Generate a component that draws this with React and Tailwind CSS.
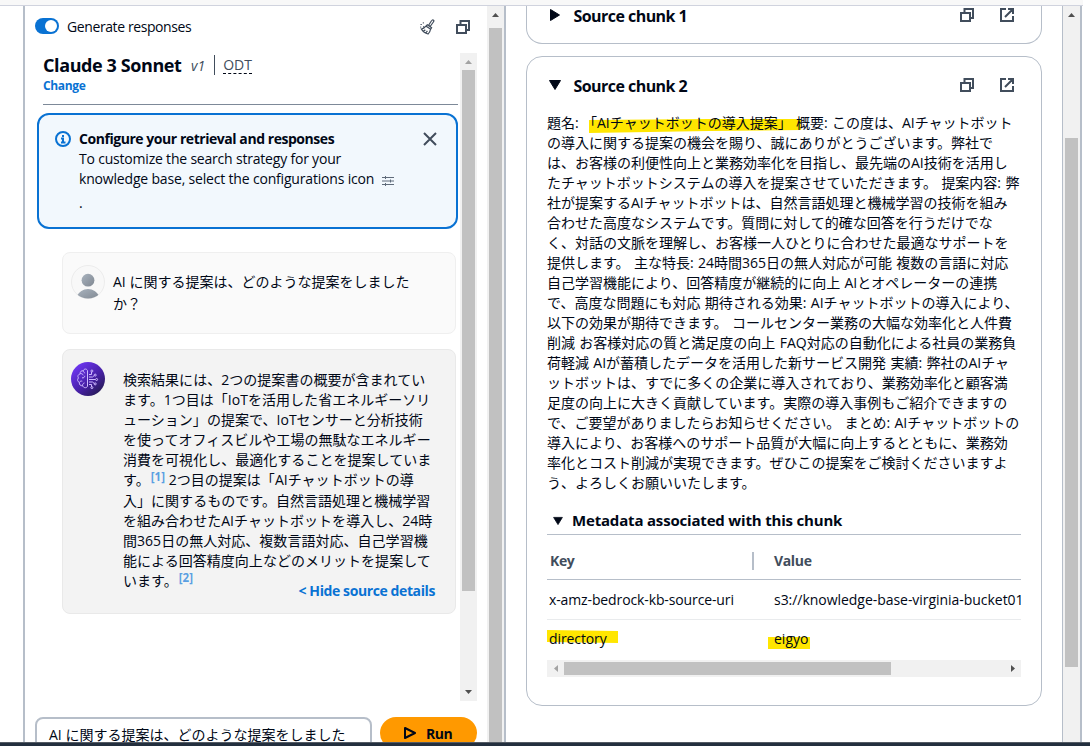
import clsx from "clsx";

const answerLines = [
    "検索結果には、2つの提案書の概要が含まれてい",
    "ます。1つ目は「IoTを活用した省エネルギーソリ",
    "ューション」の提案で、IoTセンサーと分析技術",
    "を使ってオフィスビルや工場の無駄なエネルギー",
    "消費を可視化し、最適化することを提案していま",
    <>す。<Cite n="1" /> 2つ目の提案は「AIチャットボットの導</>,
    "入」に関するものです。自然言語処理と機械学習",
    "を組み合わせたAIチャットボットを導入し、24時",
    "間365日の無人対応、複数言語対応、自己学習機",
    "能による回答精度向上などのメリットを提案して",
    <>います。<Cite n="2" /></>,
];

const chunkLines = [
    "の導入に関する提案の機会を賜り、誠にありがとうございます。弊社で",
    "は、お客様の利便性向上と業務効率化を目指し、最先端のAI技術を活用し",
    "たチャットボットシステムの導入を提案させていただきます。 提案内容: 弊",
    "社が提案するAIチャットボットは、自然言語処理と機械学習の技術を組み",
    "合わせた高度なシステムです。質問に対して的確な回答を行うだけでな",
    "く、対話の文脈を理解し、お客様一人ひとりに合わせた最適なサポートを",
    "提供します。 主な特長: 24時間365日の無人対応が可能 複数の言語に対応",
    "自己学習機能により、回答精度が継続的に向上 AIとオペレーターの連携",
    "で、高度な問題にも対応 期待される効果: AIチャットボットの導入により、",
    "以下の効果が期待できます。 コールセンター業務の大幅な効率化と人件費",
    "削減 お客様対応の質と満足度の向上 FAQ対応の自動化による社員の業務負",
    "荷軽減 AIが蓄積したデータを活用した新サービス開発 実績: 弊社のAIチャ",
    "ットボットは、すでに多くの企業に導入されており、業務効率化と顧客満",
    "足度の向上に大きく貢献しています。実際の導入事例もご紹介できますの",
    "で、ご要望がありましたらお知らせください。 まとめ: AIチャットボットの",
    "導入により、お客様へのサポート品質が大幅に向上するとともに、業務効",
    "率化とコスト削減が実現できます。ぜひこの提案をご検討くださいますよ",
    "う、よろしくお願いいたします。",
];

function Cite({ n }) {
    return <span className="relative -top-1 ml-px text-[11.5px] leading-none font-bold text-[#5a9fe2]">[{n}]</span>;
}

function CopyIcon() {
    return (
        <svg viewBox="0 0 16 16" className="size-4 fill-none stroke-[#414d5c] stroke-2">
            <path d="M2 6h9v8H2zM5.500 5.500V2H14v9h-3" />
        </svg>
    );
}

function ExternalIcon() {
    return (
        <svg viewBox="0 0 16 16" className="size-4 fill-none stroke-[#414d5c] stroke-2">
            <path d="M7 2H2v12h12V9M9 2h5v5M13.500 2.500L6 10" />
        </svg>
    );
}

function BroomIcon() {
    return (
        <svg viewBox="0 0 16 16" className="size-4 fill-none stroke-[#414d5c] stroke-[1.2]">
            <path d="M14.600 1.200c-.8-.6-1.600-.2-2.100.6L9.600 6.200l1.700 1.100 3.100-4.300c.5-.7.8-1.300.2-1.800zM8.300 5.800l4.300 2.900-.9 1.500-4.800-3.100zM6.600 7.400C5.500 9 4 9.800 2.300 10c1.500 2.400 3.900 4.300 6.700 5 1.400-1.300 2.200-2.800 2.500-4.700M4.600 12.300l1.700-1.600M6.800 14l1.600-2.200" />
            <path d="M1.500 5.500h1.300M4 7.800h1.200M3.800 3.900h1M1.300 8.200h.9" />
        </svg>
    );
}

function SlidersIcon() {
    return (
        <svg viewBox="0 0 12 10" className="h-[10px] w-3 fill-none stroke-[#5f6b7a] stroke-1">
            <path d="M0 1.500h12M0 5h12M0 8.500h12M3.500 0v3M8.500 3.500v3M3.500 7v3" />
        </svg>
    );
}

function UserAvatar() {
    return (
        <svg viewBox="0 0 34 34" className="size-[34px] shrink-0">
            <defs>
                <linearGradient id="userFill" x1="0" y1="0" x2="1" y2="1">
                    <stop offset="0" stopColor="#a9b3be" />
                    <stop offset="1" stopColor="#7f8791" />
                </linearGradient>
                <clipPath id="userClip"><circle cx="17" cy="17" r="16.500" /></clipPath>
            </defs>
            <circle cx="17" cy="17" r="16.500" fill="#f8f8f8" stroke="#ececec" />
            <g clipPath="url(#userClip)" fill="url(#userFill)">
                <circle cx="17" cy="15.200" r="6.400" />
                <path d="M6 31c2-4 6-7 11-7s9 3 11 7v4H6z" />
            </g>
        </svg>
    );
}

function BotAvatar() {
    return (
        <svg viewBox="0 0 34 34" className="size-[34px] shrink-0">
            <defs>
                <linearGradient id="botFill" x1="0.1" y1="0.2" x2="0.8" y2="1">
                    <stop offset="0" stopColor="#6b34ec" />
                    <stop offset="0.55" stopColor="#4620a4" />
                    <stop offset="1" stopColor="#251a52" />
                </linearGradient>
            </defs>
            <circle cx="17" cy="17" r="17" fill="url(#botFill)" />
            <g fill="none" stroke="#cdb8ff" strokeWidth="1">
                <path d="M16.500 8.500c-.9-2-3.600-2-4.200.3-2-.4-3.500 1-3 2.900-2.300.7-3 2.700-1.900 4.200-1.400 1.700-.8 3.900 1 4.500-.4 2.300 1.300 3.700 3.200 3.300.8 2.300 3.800 2.800 4.900.6zM12.300 8.800c.1 1.200.7 1.900 1.800 2.200M9.300 11.700c1.300-.3 2.500.2 2.900 1.600M8.400 20.400c.6-1.200 1.700-1.600 2.900-1.200M11.600 23.700c-.2-1.500.6-2.500 1.900-2.800M11 15.800c1.700.4 2.600-.5 2.800-2" />
                <path d="M18 12.500h2.500V10M18 15h3.500l1.800-1.500M18 17.500h6.500M18 20h3.500l1.800 1.500M18 22.500h2.500V25" />
                <circle cx="20.900" cy="9" r="1" />
                <circle cx="24.200" cy="13.100" r="1" />
                <circle cx="25.600" cy="17.500" r="1" />
                <circle cx="24.200" cy="21.900" r="1" />
                <circle cx="20.900" cy="25.600" r="1" />
            </g>
        </svg>
    );
}

function Arrow({ dir, muted }) {
    const points = { up: "0,4 3.5,0 7,4", down: "0,0 7,0 3.5,4", left: "4,0 4,7 0,3.5", right: "0,0 4,3.5 0,7" };
    const side = dir === "left" || dir === "right";
    return (
        <svg viewBox={side ? "0 0 4 7" : "0 0 7 4"} className={clsx(side ? "h-[7px] w-1" : "h-1 w-[7px]", muted ? "fill-[#a3a3a3]" : "fill-[#505050]")}>
            <polygon points={points[dir]} />
        </svg>
    );
}

function Caret({ open, className }) {
    return (
        <svg viewBox="0 0 12 10" className={clsx("h-[10px] w-3 fill-[#000716] stroke-[#000716] [stroke-linejoin:round]", className)}>
            <path d={open ? "M.5 .5h11L6 9.500z" : "M1.500 -.5l9 5.500-9 5.500z"} />
        </svg>
    );
}

function ChunkHeader({ title, open }) {
    return (
        <div className="flex h-6 w-full items-center">
            <Caret open={open} className="ml-[2px] overflow-visible" />
            <h3 className="ml-[12.500px] flex-1 pt-px text-[16px] font-bold tracking-[-0.55px]">{title}</h3>
            <div className="mr-[6px] flex gap-6">
                <CopyIcon />
                <ExternalIcon />
            </div>
        </div>
    );
}

function ChatPane() {
    return (
        <section className="flex w-[464px] shrink-0 flex-col border-l-2 border-[#b6bec9]">
            <div className="flex h-[47px] shrink-0 items-start pt-3 pl-[10px]">
                <span className="flex h-4 w-6 justify-end rounded-full bg-[#0972d3] p-[2px]">
                    <span className="size-3 rounded-full bg-white" />
                </span>
                <span className="ml-2 -mt-px flex-1 leading-5 tracking-[-0.4px]">Generate responses</span>
                <div className="mr-4 flex gap-5 pt-px">
                    <BroomIcon />
                    <CopyIcon />
                </div>
            </div>

            <div className="flex h-[648px] shrink-0">
                <div className="w-[435px] shrink-0 pl-3">
                    <div className="ml-[6px] h-[52px] w-[415px] border-b border-[#7d8998]">
                        <div className="flex h-6 items-center">
                            <h2 className="w-[139px] text-[18px] font-bold tracking-[-0.4px] whitespace-nowrap">Claude 3 Sonnet</h2>
                            <em className="ml-[9px] text-[#414d5c]">v1</em>
                            <span className="ml-[9px] h-5 w-px bg-[#414d5c]" />
                            <span className="ml-2 border-b border-dashed border-[#000716] leading-[17px] text-[#414d5c]">ODT</span>
                        </div>
                        <a className="block text-[12px] leading-[18px] font-bold tracking-[-0.35px] text-[#0972d3]">Change</a>
                    </div>

                    <div className="mt-2 flex h-[116px] w-[421px] rounded-xl border-2 border-[#0972d3] bg-[#f2f8fd] pt-4 pl-4">
                        <svg viewBox="0 0 16 16" className="size-4 shrink-0 fill-none stroke-[#0972d3] stroke-2">
                            <circle cx="8" cy="8" r="7" />
                            <path d="M8 4v2M6 7.500h2V11M6 11.500h4.500" />
                        </svg>
                        <div className="-mt-[2px] ml-2 flex-1 leading-5 tracking-[-0.18px] whitespace-nowrap">
                            <p className="font-bold tracking-[-0.45px]">Configure your retrieval and responses</p>
                            <p className="tracking-[-0.2px]">To customize the search strategy for your</p>
                            <p className="flex items-center">knowledge base, select the configurations icon <span className="mt-1 ml-[8px]"><SlidersIcon /></span></p>
                            <p className="mt-1">.</p>
                        </div>
                        <svg viewBox="0 0 14 14" className="mt-[1px] mr-[19px] size-[14px] fill-none stroke-[#414d5c] stroke-2">
                            <path d="M1 1l12 12M13 1L1 13" />
                        </svg>
                    </div>

                    <div className="mt-[23px] ml-[25px] flex h-[82px] w-[394px] rounded-lg border border-[#efefef] bg-[#fafafa] pt-3 pl-2">
                        <UserAvatar />
                        <div className="mt-[6px] ml-2 leading-[22px] whitespace-nowrap">
                            <p>AI に関する提案は、どのような提案をしました</p>
                            <p>か？</p>
                        </div>
                    </div>

                    <div className="mt-[15px] ml-[25px] h-[265px] w-[394px] rounded-lg border border-[#e9e9e9] bg-[#f3f3f3] pt-3 pl-2">
                        <div className="flex">
                            <BotAvatar />
                            <div className="mt-2 ml-[18px] tracking-[0.03px] whitespace-nowrap">
                                {answerLines.map((line, i) => (
                                    <p key={i} className="h-[20.1px] leading-[20px]">{line}</p>
                                ))}
                            </div>
                        </div>
                        <p className="-mt-[10px] mr-5 text-right leading-5 font-bold tracking-[-0.4px] text-[#0972d3]">&lt; Hide source details</p>
                    </div>
                </div>

                <div className="flex w-[17px] flex-col items-center bg-[#f1f1f1]">
                    <div className="flex h-[17px] items-center"><Arrow dir="up" muted /></div>
                    <div className="h-[521px] w-[13px] bg-[#c1c1c1]" />
                    <div className="flex flex-1 items-end pb-[7px]"><Arrow dir="down" /></div>
                </div>
            </div>

            <div className="mt-4 ml-[10px] flex shrink-0 gap-2">
                <div className="h-[60px] w-[337px] rounded-lg border-2 border-[#b6bec9] pt-[6px] pl-3 leading-5 whitespace-nowrap">AI に関する提案は、どのような提案をしました</div>
                <button className="flex h-8 w-[97px] items-center rounded-full bg-[#ff9900] pl-6 font-bold tracking-[-0.5px]">
                    <svg viewBox="0 0 12 14" className="h-[14px] w-3 fill-none stroke-[#000716] stroke-2 [stroke-linejoin:round]">
                        <path d="M1 2l10 5-10 5z" />
                    </svg>
                    <span className="ml-[10px]">Run</span>
                </button>
            </div>
        </section>
    );
}

function MetadataTable() {
    return (
        <div className="w-[474px]">
            <div className="flex h-[27px] items-center border-b border-[#b6bec9] pb-px">
                <Caret open className="ml-[5px] !h-2 !w-3 overflow-visible" />
                <h4 className="ml-2 text-[15px] font-bold tracking-[-0.18px]">Metadata associated with this chunk</h4>
            </div>
            <div className="flex h-[45px] items-center border-b border-[#b6bec9] pt-[7px] pl-[3px] font-bold tracking-[-0.35px] text-[#414d5c]">
                <span className="w-[202px]">Key</span>
                <span className="h-[18px] w-[2px] bg-[#b6bec9]" />
                <span className="ml-5">Value</span>
            </div>
            <div className="flex h-10 items-center overflow-hidden border-b border-[#e9ebed] pl-[2px] whitespace-nowrap">
                <span className="w-[225px] shrink-0 tracking-[-0.12px]">x-amz-bedrock-kb-source-uri</span>
                <span className="tracking-[-0.04px]">s3://knowledge-base-virginia-bucket01</span>
            </div>
            <div className="flex h-10 items-center pb-[3px]">
                <span className="relative w-[227px] pl-[2px]">
                    <svg viewBox="0 0 72 13" className="absolute top-[2px] left-0 h-[13px] w-[72px] fill-[#ffe600]"><path d="M0 0l71 1v12l-71-1z" /></svg>
                    <span className="relative tracking-[-0.1px]">directory</span>
                </span>
                <span className="relative">
                    <span className="absolute top-[9px] -left-[6px] h-3 w-[42px] bg-[#ffe600]" />
                    <span className="relative">eigyo</span>
                </span>
            </div>
            <div className="flex h-[17px] items-center bg-[#f1f1f1]">
                <div className="flex w-[17px] justify-center"><Arrow dir="left" muted /></div>
                <div className="h-[13px] w-[327px] bg-[#c1c1c1]" />
                <div className="flex flex-1 justify-end pr-[6px]"><Arrow dir="right" /></div>
            </div>
        </div>
    );
}

function SourcePane() {
    return (
        <section className="w-[556px] shrink-0 pl-5">
            <div className="flex h-[38px] w-[516px] items-start rounded-b-2xl border border-t-0 border-[#b6bec9] px-5 pb-4">
                <div className="-mt-[3px] w-full"><ChunkHeader title="Source chunk 1" /></div>
            </div>
            <div className="mt-3 h-[650px] w-[516px] rounded-2xl border border-[#b6bec9] px-5 pt-4">
                <ChunkHeader title="Source chunk 2" open />
                <div className="mt-4 h-[380px] leading-5 whitespace-nowrap [word-spacing:0.7px]">
                    <p className="relative">
                        <svg viewBox="0 0 212 15" className="absolute top-[6px] left-[42px] h-[15px] w-[212px] fill-[#ffe600]"><path d="M0 1l120-1 92 0v11l-92 1-120 2z" /></svg>
                        <span className="relative">題名: 「AIチャットボットの導入提案」 概要: この度は、AIチャットボット</span>
                    </p>
                    {chunkLines.map((line) => (
                        <p key={line}>{line}</p>
                    ))}
                </div>
                <div className="mt-[15px]"><MetadataTable /></div>
            </div>
        </section>
    );
}

export default function App() {
    return (
        <div className="flex h-[746px] w-[1090px] flex-col overflow-hidden bg-white font-['Open_Sans','Noto_Sans_CJK_JP',sans-serif] text-[14px] text-[#000716]">
            <div className="h-[6px] w-[1083px] shrink-0 border-b border-[#d0d3de] bg-[#f8f8f8]" />
            <main className="flex h-[736px] shrink-0 overflow-hidden pl-[23px]">
                <ChatPane />
                <div className="flex w-[17px] flex-col items-center bg-[#f1f1f1]">
                    <div className="flex h-[22px] items-center pb-1"><Arrow dir="up" /></div>
                    <div className="w-[13px] flex-1 bg-[#c1c1c1]" />
                </div>
                <div className="w-[2px] bg-[#b6bec9]" />
                <SourcePane />
                <div className="flex w-5 flex-col items-center border-r-2 border-l border-[#b6bec9] bg-[#f1f1f1]">
                    <div className="flex h-[132px] items-start pt-[7px]"><Arrow dir="up" /></div>
                    <div className="h-[529px] w-[13px] bg-[#c1c1c1]" />
                </div>
            </main>
            <footer className="h-1 border-t border-[#545b64] bg-[#232f3e]" />
        </div>
    );
}
